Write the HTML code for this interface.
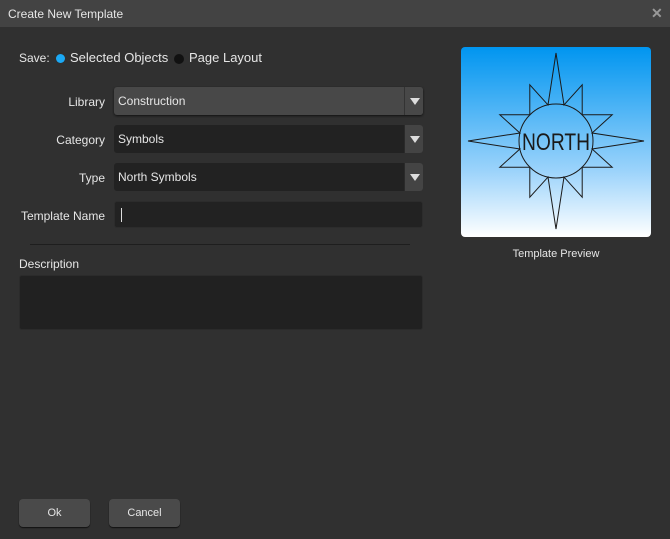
<!DOCTYPE html><html><head><style>
*{margin:0;padding:0;box-sizing:border-box}
body{width:670px;height:539px;background:#303030;font-family:"Liberation Sans",sans-serif;font-size:12px;color:#e6e6e6;position:relative;overflow:hidden}
.a{position:absolute}
.title{left:0;top:0;width:670px;height:27px;background:#434343;}
.lbl{text-align:right;width:100px;left:5px}
.fld{left:114px;width:309px;height:28px;background:#222;border-radius:3px;padding-left:4px;line-height:28px}
.arr{position:absolute;right:0;top:0;width:19px;height:28px;background:#444;border-left:1px solid #2a2a2a;border-radius:0 3px 3px 0}
.arr:after{content:"";position:absolute;left:5px;top:11px;border-left:5px solid transparent;border-right:5px solid transparent;border-top:7px solid #ddd}
.btn{top:499px;width:71px;height:28px;background:#4a4a4a;border-radius:4px;box-shadow:0 1px 1px #111;text-align:center;line-height:29px;font-size:11px}
</style></head><body>
<div class="a title"></div>
<div class="a" style="left:8px;top:7px;font-size:12px">Create New Template</div>
<div class="a" style="left:651px;top:5px;font-size:14px;font-weight:bold;color:#999">✕</div>
<div class="a" style="left:19px;top:51px">Save:</div>
<div class="a" style="left:56px;top:54px;width:9px;height:9px;border-radius:50%;background:#1ba9f5"></div>
<div class="a" style="left:70px;top:50px;font-size:13px">Selected Objects</div>
<div class="a" style="left:174px;top:54px;width:10px;height:10px;border-radius:50%;background:#111"></div>
<div class="a" style="left:189px;top:50px;font-size:13px">Page Layout</div>
<div class="a lbl" style="top:95px">Library</div>
<div class="a fld" style="top:87px;background:#484848;box-shadow:0 1px 2px #111">Construction<div class="arr" style="background:#484848;border-left-color:#333"></div></div>
<div class="a lbl" style="top:133px">Category</div>
<div class="a fld" style="top:125px">Symbols<div class="arr"></div></div>
<div class="a lbl" style="top:171px">Type</div>
<div class="a fld" style="top:163px">North Symbols<div class="arr"></div></div>
<div class="a lbl" style="top:209px">Template Name</div>
<div class="a fld" style="top:201px;height:27px;border:1px solid #2c2c2c"><span style="display:inline-block;width:1px;height:14px;background:#ddd;margin-top:6px;margin-left:2px;vertical-align:top"></span></div>
<div class="a" style="left:30px;top:244px;width:380px;height:1px;background:#1e1e1e"></div>
<div class="a" style="left:19px;top:257px">Description</div>
<div class="a" style="left:19px;top:275px;width:404px;height:55px;background:#212121;border:1px solid #2b2b2b;border-radius:3px"></div>
<div class="a" style="left:461px;top:47px;width:190px;height:190px;border-radius:4px;overflow:hidden;background:linear-gradient(#0095f0,#9bd3fb 65%,#fff)">
<svg width="190" height="190" viewBox="0 0 190 190"><g fill="none" stroke="#1a1a1a" stroke-width="1">
<polygon points="95,6 103,57.9 121.2,37.8 121.2,67.8 151.2,67.8 131.1,86 183,94 131.1,102 151.2,120.2 121.2,120.2 121.2,150.2 103,130.1 95,182 87,130.1 68.8,150.2 68.8,120.2 38.8,120.2 58.9,102 7,94 58.9,86 38.8,67.8 68.8,67.8 68.8,37.8 87,57.9"/>
<circle cx="95" cy="94" r="37"/></g>
<text x="61" y="103" font-family="Liberation Sans,sans-serif" font-size="24" fill="#1a1a1a" textLength="68" lengthAdjust="spacingAndGlyphs" transform="translate(61 103) scale(1,1) translate(-61 -103)">NORTH</text></svg></div>
<div class="a" style="left:461px;top:248px;width:190px;text-align:center;font-size:11px">Template Preview</div>
<div class="a btn" style="left:19px">Ok</div>
<div class="a btn" style="left:109px">Cancel</div>
</body></html>
